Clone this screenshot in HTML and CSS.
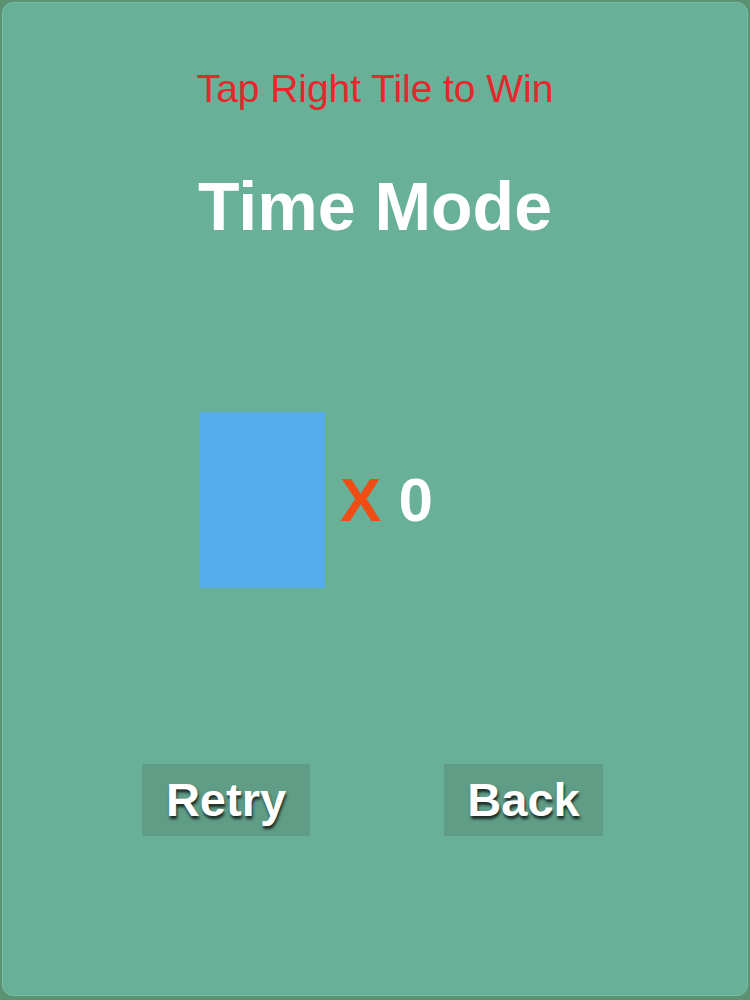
FILE: index.html
```html
<!DOCTYPE html>
<html>
<head>
<meta charset="utf-8">
<link rel="stylesheet" href="styles.css">
</head>
<body>
<div class="frame">
  <div class="panel">
    <div class="hint">Tap Right Tile to Win</div>
    <div class="title">Time Mode</div>
    <div class="score-row">
      <div class="tile"></div>
      <div class="score"><span class="x">X</span> 0</div>
    </div>
    <div class="buttons">
      <div class="btn btn-retry">Retry</div>
      <div class="btn btn-back">Back</div>
    </div>
  </div>
</div>
</body>
</html>
```
FILE: styles.css
```css
html, body {
  margin: 0;
  padding: 0;
  width: 750px;
  height: 1000px;
  overflow: hidden;
}
body {
  font-family: "Liberation Sans", Arial, sans-serif;
  background: #5a9272;
}
.frame {
  padding: 2px 2px 4px 2px;
  height: 1000px;
  box-sizing: border-box;
}
.panel {
  height: 100%;
  box-sizing: border-box;
  background: #68b097;
  border: 1px solid #78bfa3;
  border-radius: 11px;
  display: flex;
  flex-direction: column;
  align-items: center;
}
.hint {
  margin-top: 66px;
  font-size: 39px;
  line-height: 1;
  color: #e8262c;
  letter-spacing: -0.05px;
}
.title {
  margin-top: 64px;
  font-size: 68px;
  line-height: 1;
  font-weight: bold;
  color: #ffffff;
}
.score-row {
  margin-top: 172px;
  display: flex;
  align-items: center;
  align-self: flex-start;
  margin-left: 197px;
}
.tile {
  width: 125px;
  height: 176px;
  background: #56adec;
}
.score {
  margin-left: 15px;
  font-size: 62px;
  line-height: 1;
  font-weight: bold;
  color: #ffffff;
}
.x {
  color: #ef4d14;
}
.buttons {
  margin-top: 176px;
  display: flex;
  gap: 134px;
  align-self: flex-start;
  margin-left: 139px;
}
.btn {
  height: 72px;
  line-height: 72px;
  font-size: 47px;
  font-weight: bold;
  color: #ffffff;
  background: #5f9d86;
  text-align: center;
  text-shadow: 1px 3px 3px rgba(0, 0, 0, 0.75);
}
.btn-retry {
  width: 168px;
}
.btn-back {
  width: 159px;
}
```
